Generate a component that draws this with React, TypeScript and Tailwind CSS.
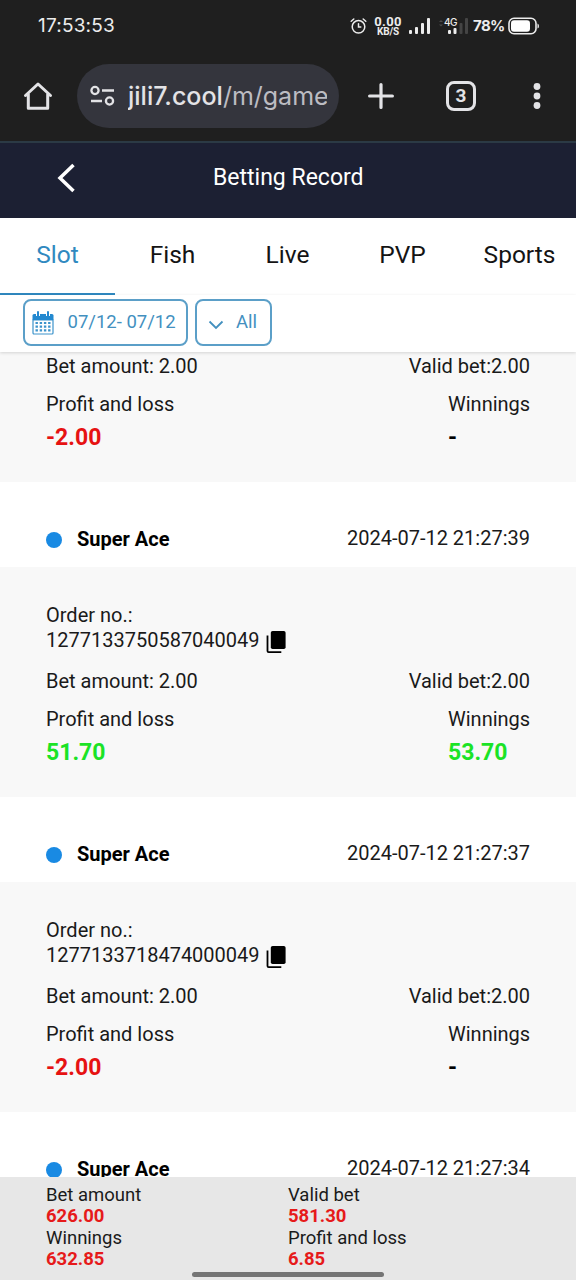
import { clsx } from "clsx";

interface BetRecord {
  order: string;
  time: string;
  profit: string;
  winnings: string;
}

const RECORDS: BetRecord[] = [
  { order: "1277133750587040049", time: "2024-07-12 21:27:39", profit: "51.70", winnings: "53.70" },
  { order: "1277133718474000049", time: "2024-07-12 21:27:37", profit: "-2.00", winnings: "-" },
];

const TABS = ["Slot", "Fish", "Live", "PVP", "Sports"];

const TOTALS = [
  { label: "Bet amount", value: "626.00" },
  { label: "Valid bet", value: "581.30" },
  { label: "Winnings", value: "632.85" },
  { label: "Profit and loss", value: "6.85" },
];

function StatusBar() {
  return (
    <div className="flex h-[52px] items-center pl-[38px] pr-[37px] font-['Inter',sans-serif] text-[#ececec]">
      <span className="text-[19px] leading-6 tracking-[0.2px]">17:53:53</span>
      <div className="ml-auto flex items-center">
        <svg className="h-[18px] w-[17px]" viewBox="0 0 17 18" fill="none" stroke="currentColor" strokeWidth="1.5" strokeLinecap="round">
          <circle cx="8.5" cy="9.8" r="6.3" />
          <path d="M8.5 6.8v3.3h2.3M1.2 4.2 3.8 2M15.8 4.2 13.2 2" />
        </svg>
        <div className="ml-[7px] flex w-7 flex-col items-center font-['Roboto',sans-serif] font-bold">
          <span className="text-[13px] leading-[11px] tracking-[0.3px]">0.00</span>
          <span className="text-[10px] leading-[10px] tracking-[-0.2px]">KB/S</span>
        </div>
        <svg className="ml-[7px] h-[18px] w-[22px]" viewBox="0 0 22 18" fill="currentColor">
          <rect x="0" y="13" width="3" height="4" rx="1" />
          <rect x="6" y="10" width="3" height="7" rx="1" />
          <rect x="12" y="6" width="3" height="11" rx="1" />
          <rect x="18" y="1" width="3" height="16" rx="1" />
        </svg>
        <div className="relative ml-[7px] h-[18px] w-[31px]">
          <svg className="h-[18px] w-[31px]" viewBox="0 0 31 18">
            <path d="m1 5 2-2 2 2zM1 7.500l2 2 2-2z" fill="#4a4a4a" />
            <rect x="10" y="13" width="3" height="4" rx="1" fill="currentColor" />
            <rect x="15.500" y="11" width="3" height="6" rx="1" fill="currentColor" />
            <rect x="21.500" y="6" width="3" height="11" rx="1" fill="#444" />
            <rect x="27" y="1" width="3" height="16" rx="1" fill="#444" />
          </svg>
          <span className="absolute left-[6px] top-0 text-[10px] leading-[11px] font-medium tracking-[-0.5px]">4G</span>
        </div>
        <span className="ml-1 w-[31px] text-[15px] leading-5 font-bold tracking-[-0.6px]">78%</span>
        <svg className="ml-1 h-[18px] w-[31px]" viewBox="0 0 31 18">
          <rect x="1" y="1.300" width="27" height="15.400" rx="5" fill="none" stroke="currentColor" strokeWidth="1.600" />
          <rect x="3" y="3.300" width="19" height="11.400" rx="3" fill="#fff" />
          <path d="M29.500 6.500v5q1.500-.5 1.500-2.500t-1.500-2.500" fill="currentColor" />
        </svg>
      </div>
    </div>
  );
}

function BrowserBar() {
  return (
    <div className="flex h-[89px] items-start pl-[23px] pt-3 text-[#e3e3e6]">
      <svg className="mt-[17px] h-[30px] w-[30px]" viewBox="0 0 30 30" fill="none" stroke="currentColor" strokeWidth="3" strokeLinejoin="round" strokeLinecap="round">
        <path d="M2.500 14.500 15 3l12.500 11.500M5.300 13v14.300h19.400V13" />
      </svg>
      <div className="ml-6 flex h-16 w-[262px] items-center rounded-full bg-[#34353d] pl-[13px]">
        <svg className="h-6 w-[26px]" viewBox="0 0 26 24" fill="none" stroke="currentColor" strokeWidth="2.300">
          <circle cx="5" cy="6.500" r="3.600" />
          <path d="M12 6.500h12M1 17h11" />
          <circle cx="19.500" cy="17" r="3.600" />
        </svg>
        <div className="ml-3 w-[199px] overflow-hidden whitespace-nowrap font-['Inter',sans-serif] text-[25px] leading-9">
          <span className="font-medium">jili7.cool</span>
          <span className="text-[#bcbcc2]">/m/game</span>
        </div>
      </div>
      <svg className="ml-[29px] mt-[19px] h-[26px] w-[26px]" viewBox="0 0 26 26" fill="none" stroke="currentColor" strokeWidth="3.200" strokeLinecap="round">
        <path d="M13 1.600v22.800M1.600 13h22.800" />
      </svg>
      <div className="ml-[52px] mt-[17px] flex h-[30px] w-[30px] items-center justify-center rounded-lg border-[3px] border-[#e3e3e6] font-['Roboto',sans-serif] text-[19px] font-bold">
        3
      </div>
      <svg className="ml-[57px] mt-[18px] h-7 w-2" viewBox="0 0 8 28" fill="currentColor">
        <circle cx="4" cy="4.500" r="3.400" />
        <circle cx="4" cy="14" r="3.400" />
        <circle cx="4" cy="23.500" r="3.400" />
      </svg>
    </div>
  );
}

function CalendarIcon() {
  return (
    <svg className="h-6 w-[22px]" viewBox="0 0 22 24">
      <path d="M1 9h20v13a1 1 0 0 1-1 1H2a1 1 0 0 1-1-1z" fill="#fff" stroke="#3c93cb" strokeWidth="1.200" />
      <path d="M.5 4.500Q.5 3 2 3h18q1.500 0 1.500 1.500V9H.5z" fill="#2389d0" />
      <path d="M6 1v4M16 1v4" stroke="#fff" strokeWidth="4" />
      <path d="M6 1v4M16 1v4" stroke="#2389d0" strokeWidth="2" strokeLinecap="round" />
      <path d="M3.500 12h15M3.500 15.700h15M3.500 19.400h15" stroke="#3c93cb" strokeWidth="2.200" strokeDasharray="2.400 1.800" />
    </svg>
  );
}

function CopyIcon() {
  return (
    <svg className="mt-0.5 h-6 w-5" viewBox="0 0 20 24">
      <rect x="4.800" y="1" width="14.800" height="18" rx="1.800" fill="#000" />
      <path d="M1.500 5.500V21q0 1.200 1.200 1.200h12.600" fill="none" stroke="#000" strokeWidth="1.800" />
    </svg>
  );
}

function RecordHead({ time }: { time: string }) {
  return (
    <div className="flex h-[85px] shrink-0 items-center bg-white px-[46px] pt-[29px]">
      <span className="mt-0.5 h-4 w-4 rounded-full bg-[#198ae3]" />
      <span className="ml-[15px] font-bold text-black">Super Ace</span>
      <span className="-mt-px ml-auto">{time}</span>
    </div>
  );
}

function BetDetails({ profit, winnings }: { profit: string; winnings: string }) {
  const won = !profit.startsWith("-");
  return (
    <>
      <div className="flex justify-between">
        <span>Bet amount: 2.00</span>
        <span>Valid bet:2.00</span>
      </div>
      <div className="mt-[13px] flex justify-between">
        <div>
          <p>Profit and loss</p>
          <p className={clsx("mt-2 text-[23px] font-bold", won ? "text-[#1be326]" : "text-[#e61212]")}>{profit}</p>
        </div>
        <div className="w-[82px]">
          <p>Winnings</p>
          <p className={clsx("mt-2 text-[23px] font-bold", won ? "text-[#1be326]" : "text-black")}>{winnings}</p>
        </div>
      </div>
    </>
  );
}

export default function App() {
  return (
    <div className="flex h-[1280px] w-[576px] flex-col overflow-hidden bg-white font-['Roboto',sans-serif]">
      <div className="shrink-0 bg-[#1f1f1f]">
        <StatusBar />
        <BrowserBar />
      </div>

      <header className="flex h-[77px] shrink-0 items-center border-t-2 border-[#2b3a45] bg-[#1c2033] pb-[5px] pl-[56px] text-white">
        <svg className="h-[30px] w-5" viewBox="0 0 20 30" fill="none" stroke="currentColor" strokeWidth="3.500">
          <path d="M17.500 2 4 15l13.500 13" />
        </svg>
        <h1 className="ml-[137px] text-[23px] leading-7">Betting Record</h1>
      </header>

      <nav className="grid h-[77px] shrink-0 grid-cols-[115px_115px_115px_115px_119px] text-center text-[24.500px] text-[#141414]">
        {TABS.map((tab, i) => (
          <button
            key={tab}
            className={clsx("border-b-[2px]", i === 0 ? "border-[#3089c0] text-[#3089c0]" : "border-transparent")}
          >
            {tab}
          </button>
        ))}
      </nav>

      <div className="z-10 flex h-[57px] shrink-0 items-start gap-[7px] bg-white pl-[23px] pt-1 text-[#4390bf] shadow-[0_1px_3px_rgba(0,0,0,0.15)]">
        <button className="flex h-[47px] w-[165px] items-center rounded-lg border-2 border-[#5b9fc8] pl-[7px]">
          <CalendarIcon />
          <span className="ml-[13.500px] whitespace-nowrap text-[18.500px]">07/12- 07/12</span>
        </button>
        <button className="flex h-[47px] w-[77px] items-center rounded-lg border-2 border-[#5b9fc8] pl-[11px]">
          <svg className="mt-1 h-2.5 w-4" viewBox="0 0 16 10" fill="none" stroke="currentColor" strokeWidth="1.800">
            <path d="m1.500 1.500 6.500 6.500 6.500-6.500" />
          </svg>
          <span className="ml-3 text-[18.500px]">All</span>
        </button>
      </div>

      <main className="flex h-[825px] shrink-0 flex-col overflow-hidden text-[20px] leading-[25px] text-[#1a1a1a]">
        <div className="h-[130px] shrink-0 bg-[#f8f8f8] px-[46px] pt-[2px]">
          <BetDetails profit="-2.00" winnings="-" />
        </div>
        {RECORDS.map((record) => (
          <section key={record.order} className="flex shrink-0 flex-col">
            <RecordHead time={record.time} />
            <div className="h-[230px] bg-[#f8f8f8] px-[46px] pt-9">
              <p>Order no.:</p>
              <div className="mb-4 flex h-[25px] items-center gap-[6px]">
                <span>{record.order}</span>
                <CopyIcon />
              </div>
              <BetDetails profit={record.profit} winnings={record.winnings} />
            </div>
          </section>
        ))}
        <RecordHead time="2024-07-12 21:27:34" />
      </main>

      <footer className="relative h-[103px] shrink-0 bg-[#e7e7e7] pl-[46px] pt-2 text-[18.500px] leading-[21.300px] text-[#1a1a1a]">
        <div className="grid grid-cols-[242px_1fr]">
          {TOTALS.map((total) => (
            <div key={total.label}>
              <p>{total.label}</p>
              <p className="font-bold text-[#e61a1a]">{total.value}</p>
            </div>
          ))}
        </div>
        <div className="absolute bottom-[3px] left-48 h-[5px] w-48 rounded-full bg-[#757575]" />
      </footer>
    </div>
  );
}
